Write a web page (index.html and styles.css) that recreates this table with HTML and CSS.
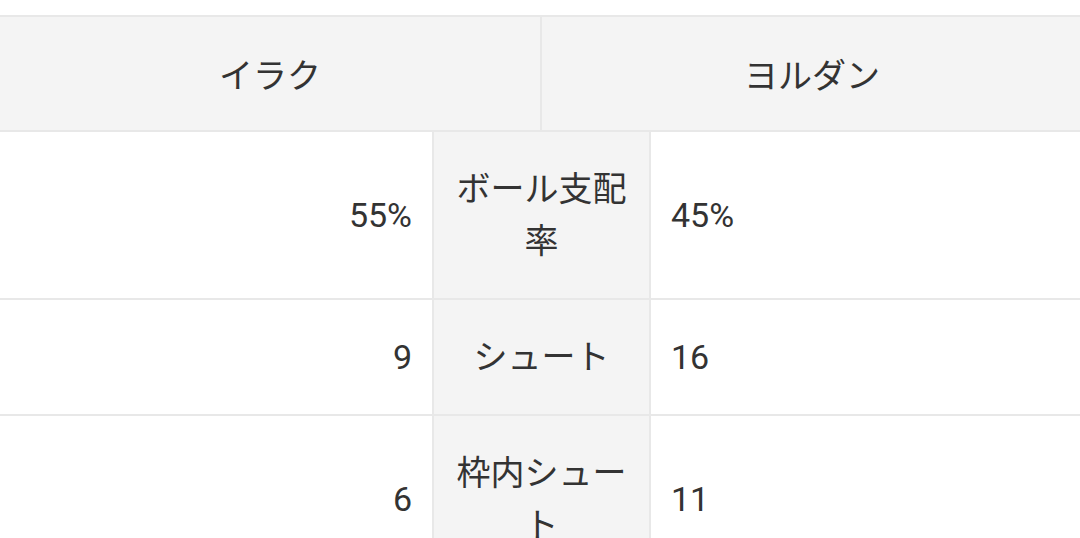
FILE: index.html
```html
<!DOCTYPE html>
<html lang="ja">
<head>
<meta charset="utf-8">
<link rel="stylesheet" href="styles.css">
</head>
<body>
<div class="page">
  <table class="stats">
    <colgroup>
      <col class="c-side">
      <col class="c-mid-a">
      <col class="c-mid-b">
      <col class="c-side2">
    </colgroup>
    <thead>
      <tr>
        <th colspan="2" class="team">イラク</th>
        <th colspan="2" class="team">ヨルダン</th>
      </tr>
    </thead>
    <tbody>
      <tr>
        <td class="home">55%</td>
        <td colspan="2" class="label">ボール支配率</td>
        <td class="away">45%</td>
      </tr>
      <tr>
        <td class="home">9</td>
        <td colspan="2" class="label">シュート</td>
        <td class="away">16</td>
      </tr>
      <tr>
        <td class="home">6</td>
        <td colspan="2" class="label">枠内シュート</td>
        <td class="away">11</td>
      </tr>
    </tbody>
  </table>
</div>
</body>
</html>
```

FILE: styles.css
```css
html, body {
  margin: 0;
  padding: 0;
  background: #ffffff;
}

.page {
  padding-top: 15px;
  overflow: hidden;
  height: 538px;
}

.stats {
  border-collapse: collapse;
  table-layout: fixed;
  width: 1084px;
  margin-left: -2px;
  font-family: Roboto, "Noto Sans CJK JP", sans-serif;
  font-size: 34px;
  line-height: 52px;
  color: #333333;
}

.c-side { width: 434px; }
.c-mid-a { width: 108px; }
.c-mid-b { width: 109px; }
.c-side2 { width: 433px; }

.stats th,
.stats td {
  border: 2px solid #e8e8e8;
  padding: 31px 20px;
  font-weight: normal;
}

.team {
  background: #f4f4f4;
  text-align: center;
}

.stats th.team {
  padding-top: 33px;
  padding-bottom: 28px;
}

.home {
  text-align: right;
  padding-right: 22px;
}

.away {
  text-align: left;
}

.label {
  background: #f4f4f4;
  text-align: center;
}
```
